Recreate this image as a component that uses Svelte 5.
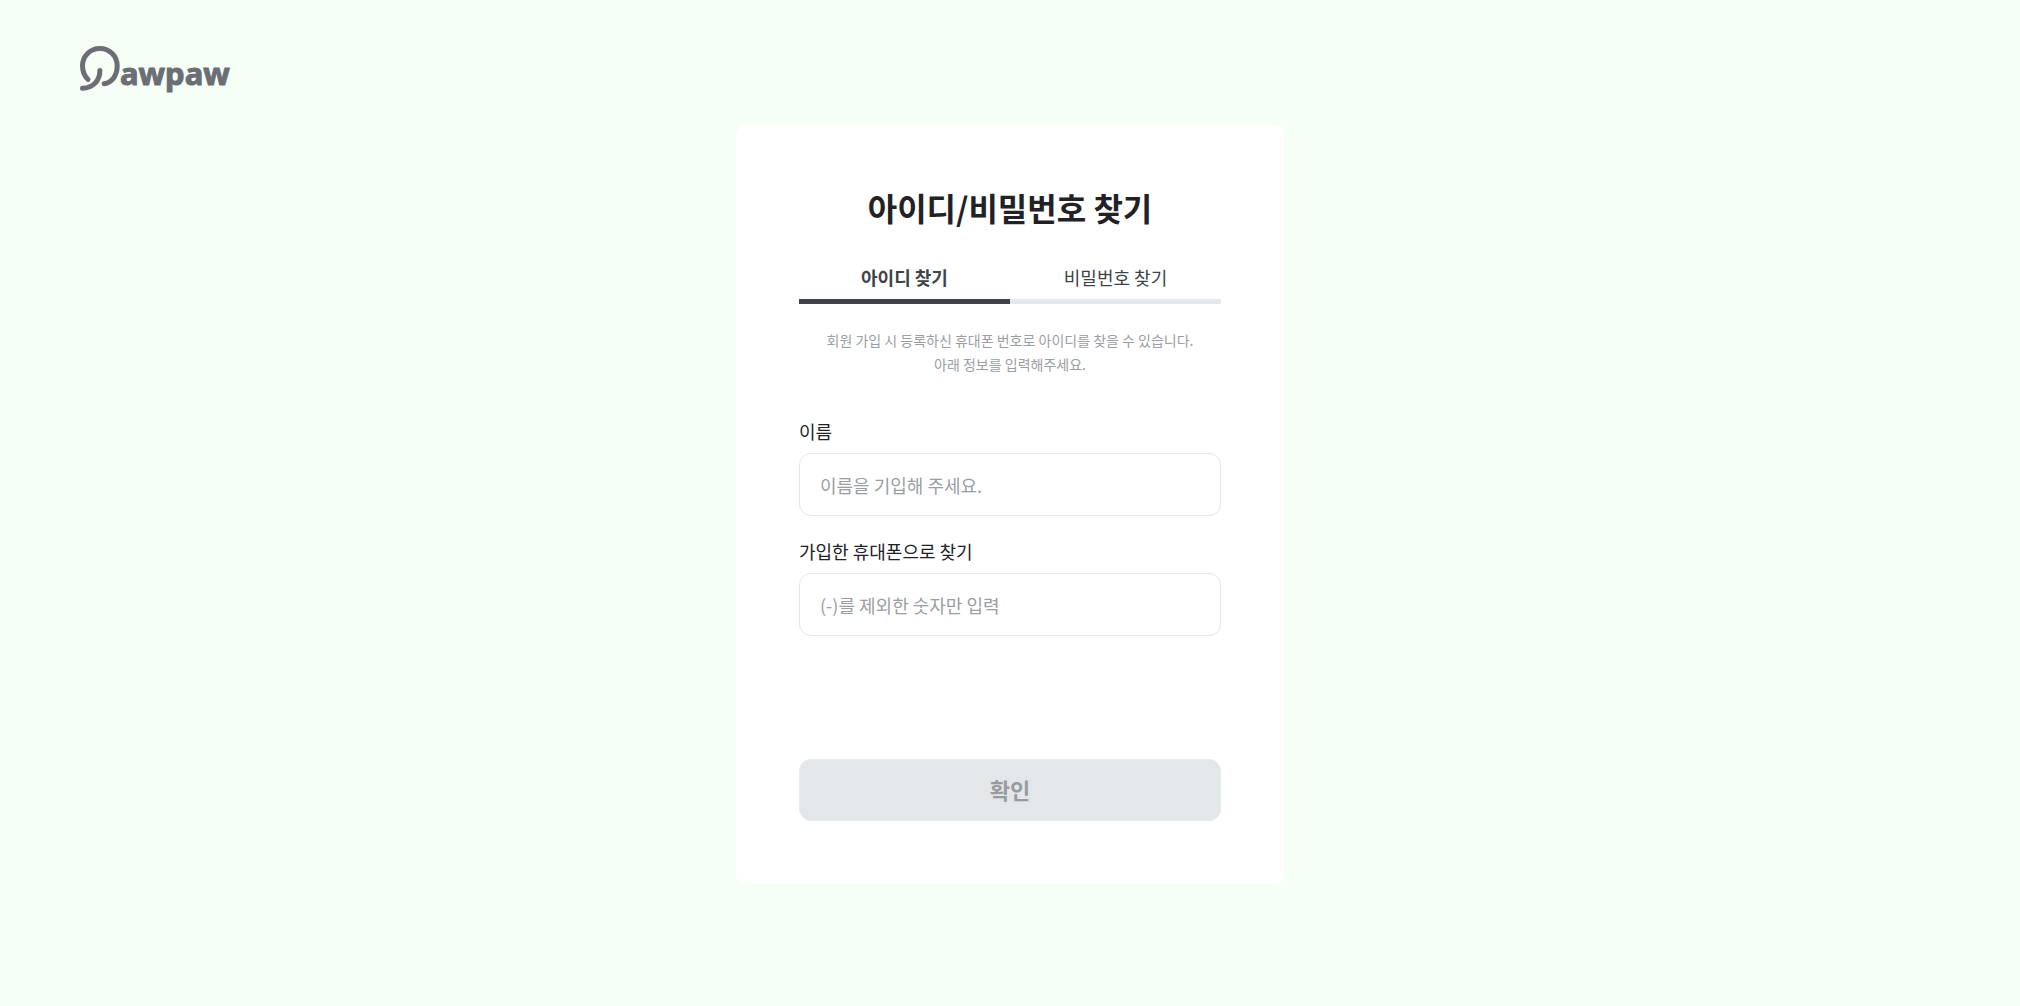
<script lang="ts">
	type Tab = 'id' | 'password';

	const tabs: { key: Tab; label: string }[] = [
		{ key: 'id', label: '아이디 찾기' },
		{ key: 'password', label: '비밀번호 찾기' }
	];

	let selected = $state<Tab>('id');
	let name = $state('');
	let phone = $state('');

	let disabled = $derived(!name || !phone);
</script>

<div class="page">
	<header>
		<a class="logo" href="/" aria-label="Pawpaw">
			<svg width="152" height="48" viewBox="0 0 152 48" fill="none">
				<path
					d="M8 33.5C4.5 30.2 2.5 25.5 2.5 19.8C2.5 9.9 10.2 2.5 19.9 2.5C29.6 2.5 37.2 10 37.2 19.8C37.2 29.5 32 36.5 24.2 37.8"
				/>
				<path d="M19.9 24.5C19.9 34 13.5 42.2 2.5 42.2" />
				<text x="40" y="39">awpaw</text>
			</svg>
		</a>
	</header>

	<main class="card">
		<h1>아이디/비밀번호 찾기</h1>
		<nav class="tabs">
			{#each tabs as tab}
				<button
					type="button"
					class="tab"
					class:active={selected === tab.key}
					onclick={() => (selected = tab.key)}
				>
					{tab.label}
				</button>
			{/each}
		</nav>
		<p class="guide">
			회원 가입 시 등록하신 휴대폰 번호로 아이디를 찾을 수 있습니다.<br />
			아래 정보를 입력해주세요.
		</p>
		<form onsubmit={(e) => e.preventDefault()}>
			<div class="field">
				<label for="name">이름</label>
				<input id="name" type="text" placeholder="이름을 기입해 주세요." bind:value={name} />
			</div>
			<div class="field">
				<label for="phone">가입한 휴대폰으로 찾기</label>
				<input id="phone" type="tel" placeholder="(-)를 제외한 숫자만 입력" bind:value={phone} />
			</div>
			<button class="submit" type="submit" {disabled}>확인</button>
		</form>
	</main>
</div>

<style>
	:global(body) {
		background-color: #f5fff6;
	}
	.page {
		box-sizing: border-box;
		min-height: 100vh;
		padding-bottom: 48px;
		font-family: 'Noto Sans CJK KR', sans-serif;
		color: #222226;
	}
	header {
		box-sizing: border-box;
		height: 125px;
		padding: 46px 80px 0;
	}
	.logo {
		display: inline-flex;
		color: #6b6e75;
	}
	.logo path {
		stroke: currentColor;
		stroke-width: 5;
		stroke-linecap: round;
	}
	.logo text {
		font-family: 'Noto Sans', sans-serif;
		font-size: 31px;
		font-weight: 700;
		fill: currentColor;
		stroke: currentColor;
		stroke-width: 1;
		stroke-linejoin: round;
	}
	.card {
		box-sizing: border-box;
		width: 100%;
		max-width: 548px;
		margin: 0 auto;
		padding: 58px 63px 63px;
		background-color: #fff;
		border-radius: 10px;
	}
	h1 {
		margin: 0;
		font-size: 32px;
		font-weight: 700;
		line-height: 48px;
		text-align: center;
	}
	.tabs {
		display: flex;
		margin-top: 26px;
	}
	.tab {
		flex: 1;
		padding: 6px 0 8px;
		border: none;
		border-bottom: 5px solid #e5e8eb;
		background: none;
		font-family: inherit;
		font-size: 18px;
		line-height: 28px;
		color: #3e4347;
		cursor: pointer;
	}
	.tab.active {
		border-color: #3e4347;
		font-weight: 700;
	}
	.guide {
		margin: 24px 0 41px;
		font-size: 14px;
		line-height: 24px;
		text-align: center;
		color: #9a9ea3;
	}
	.field {
		display: flex;
		flex-direction: column;
		gap: 8px;
		margin-bottom: 21px;
	}
	label {
		font-size: 18px;
		line-height: 28px;
	}
	input {
		box-sizing: border-box;
		width: 100%;
		height: 63px;
		padding: 0 20px;
		border: 1px solid #e6e6e8;
		border-radius: 12px;
		background-color: #fff;
		font-family: inherit;
		font-size: 18px;
		color: #222226;
	}
	input::placeholder {
		color: #9a9ea3;
	}
	.submit {
		width: 100%;
		height: 62px;
		margin-top: 102px;
		border: 1px solid #e9eaec;
		border-radius: 12px;
		background-color: #3e4347;
		font-family: inherit;
		font-size: 22px;
		line-height: 32px;
		padding: 0 0 2px;
		font-weight: 700;
		color: #fff;
	}
	.submit:disabled {
		background-color: #e4e7ea;
		color: #989b9f;
	}
</style>
